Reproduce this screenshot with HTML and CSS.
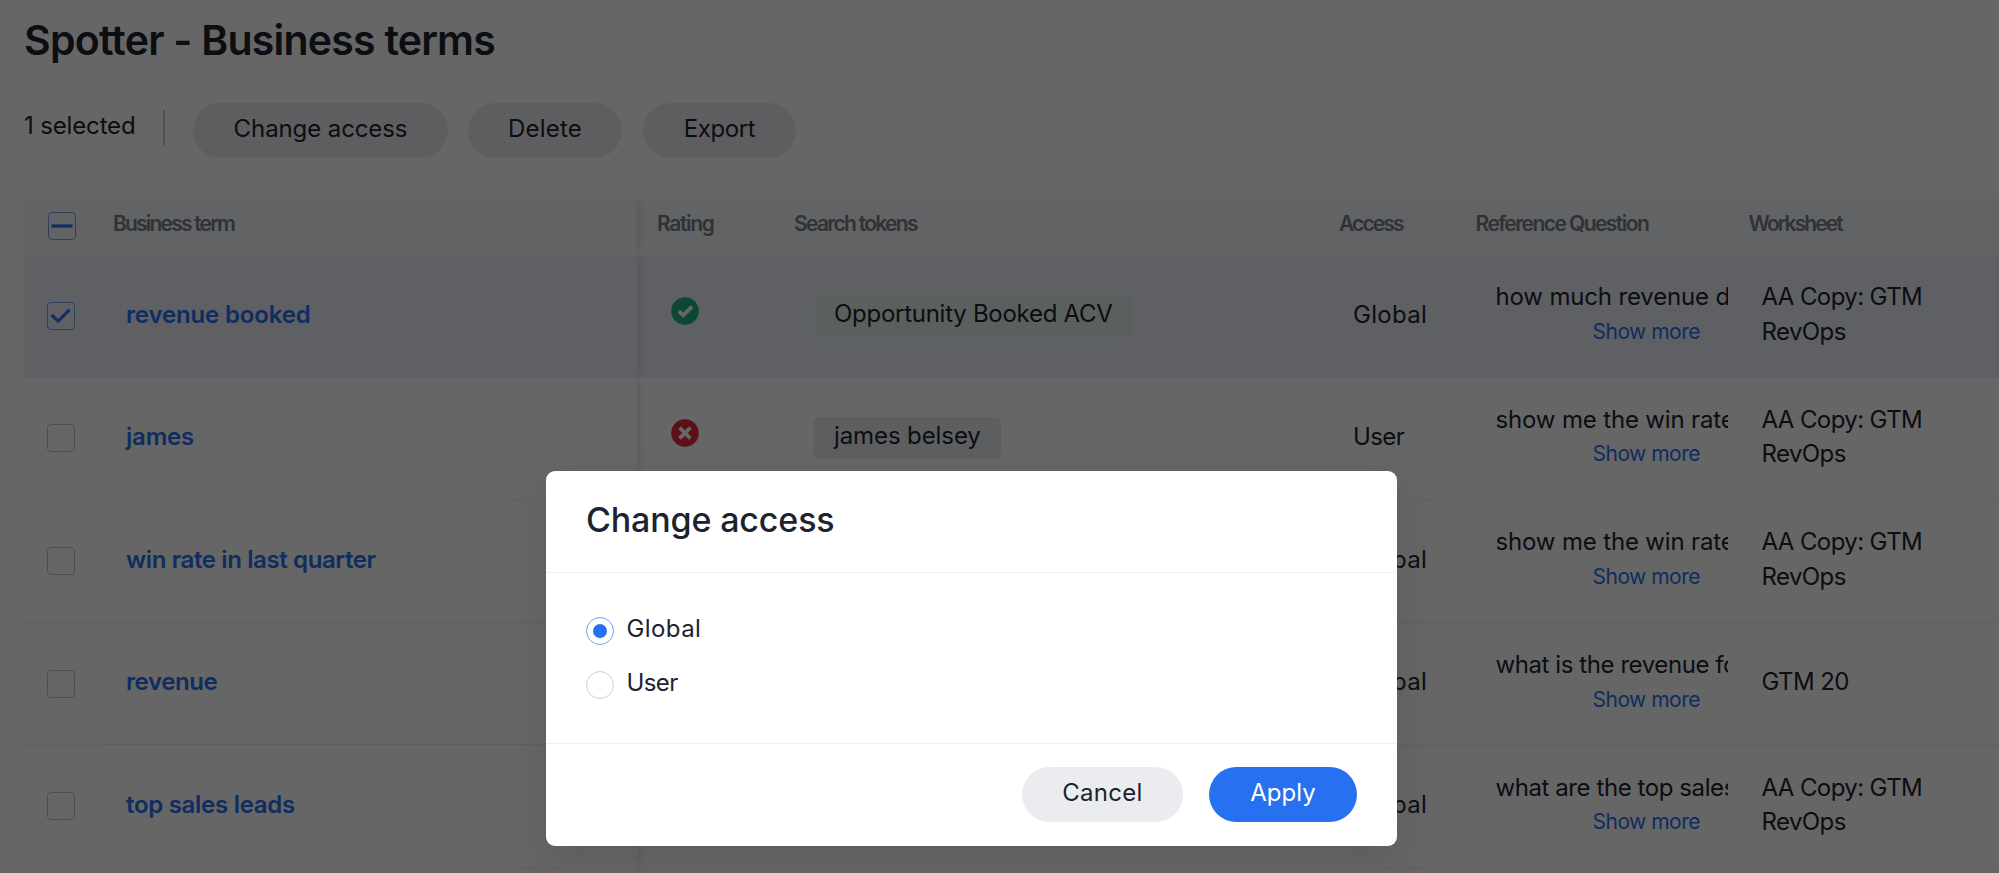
FILE: index.html
```html
<!DOCTYPE html>
<html lang="en">
<head>
<meta charset="utf-8">
<title>Spotter - Business terms</title>
<link rel="stylesheet" href="styles.css">
</head>
<body>
<main class="page">
  <h1 class="title">Spotter - Business terms</h1>
  <div class="toolbar">
    <span class="count">1 selected</span>
    <span class="divider"></span>
    <button class="btn access-btn">Change access</button>
    <button class="btn delete-btn">Delete</button>
    <button class="btn export-btn">Export</button>
  </div>
  <section class="table">
    <div class="row head">
      <div class="cell check"><span class="box on"><svg viewBox="0 0 28 28"><path d="M3.5 14H24.5" stroke-width="3.2"/></svg></span></div>
      <div class="cell term">Business term</div>
      <div class="cell rating">Rating</div>
      <div class="cell tokens">Search tokens</div>
      <div class="cell access">Access</div>
      <div class="cell question">Reference Question</div>
      <div class="cell sheet">Worksheet</div>
    </div>
    <div class="row selected">
      <div class="cell check"><span class="box on"><svg viewBox="0 0 28 28"><path d="M4.6 12.8L11.2 19.2L22.5 7.6" stroke-width="3"/></svg></span></div>
      <div class="cell term">revenue booked</div>
      <div class="cell rating"><svg class="icon" viewBox="0 0 28 28"><circle class="good" cx="14" cy="14" r="13.8"/><path d="M7.8 14.2L12.3 18.4L21 9.6"/></svg></div>
      <div class="cell tokens"><span class="token match">Opportunity Booked ACV</span></div>
      <div class="cell access global">Global</div>
      <div class="cell question"><span class="ask">how much revenue d</span><a class="more">Show more</a></div>
      <div class="cell sheet">AA Copy: GTM RevOps</div>
    </div>
    <div class="row">
      <div class="cell check"><span class="box"></span></div>
      <div class="cell term james">james</div>
      <div class="cell rating"><svg class="icon" viewBox="0 0 28 28"><circle class="bad" cx="14" cy="14" r="13.8"/><path d="M8.6 8.6L19.4 19.4M19.4 8.6L8.6 19.4"/></svg></div>
      <div class="cell tokens"><span class="token james-token">james belsey</span></div>
      <div class="cell access user">User</div>
      <div class="cell question"><span class="ask">show me the win rate</span><a class="more">Show more</a></div>
      <div class="cell sheet">AA Copy: GTM RevOps</div>
    </div>
    <div class="row">
      <div class="cell check"><span class="box"></span></div>
      <div class="cell term win">win rate in last quarter</div>
      <div class="cell rating"></div>
      <div class="cell tokens"></div>
      <div class="cell access global">Global</div>
      <div class="cell question"><span class="ask">show me the win rate</span><a class="more">Show more</a></div>
      <div class="cell sheet">AA Copy: GTM RevOps</div>
    </div>
    <div class="row">
      <div class="cell check"><span class="box"></span></div>
      <div class="cell term revenue">revenue</div>
      <div class="cell rating"></div>
      <div class="cell tokens"></div>
      <div class="cell access global">Global</div>
      <div class="cell question"><span class="ask tight">what is the revenue fo</span><a class="more">Show more</a></div>
      <div class="cell sheet gtm">GTM 20</div>
    </div>
    <div class="row">
      <div class="cell check"><span class="box"></span></div>
      <div class="cell term top">top sales leads</div>
      <div class="cell rating"></div>
      <div class="cell tokens"></div>
      <div class="cell access global">Global</div>
      <div class="cell question"><span class="ask tight">what are the top sales</span><a class="more">Show more</a></div>
      <div class="cell sheet">AA Copy: GTM RevOps</div>
    </div>
    <div class="row">
      <div class="cell check"></div>
      <div class="cell term"></div>
    </div>
  </section>
</main>
<div class="overlay">
  <div class="modal" role="dialog">
    <h2 class="modal-title">Change access</h2>
    <div class="options">
      <label class="option"><span class="radio chosen"></span><span class="label-global">Global</span></label>
      <label class="option"><span class="radio"></span><span class="label-user">User</span></label>
    </div>
    <div class="actions">
      <button class="btn cancel">Cancel</button>
      <button class="btn apply">Apply</button>
    </div>
  </div>
</div>
</body>
</html>
```
FILE: styles.css
```css
* { box-sizing: border-box; }

body {
  margin: 0;
  height: 873px;
  overflow: hidden;
  background: #fff;
  color: #1d232f;
  font: 400 24px/34.5px Inter, "Liberation Sans", sans-serif;
}

.page {
  height: 873px;
  overflow: hidden;
  padding: 14px 0 0 24px;
}

.title {
  margin: 0;
  font-size: 41px;
  font-weight: 600;
  line-height: 52px;
  letter-spacing: -0.76px;
}

.toolbar {
  display: flex;
  align-items: center;
  height: 55px;
  margin-top: 37px;
}

.count {
  width: 139px;
  padding-bottom: 8px;
  letter-spacing: -0.15px;
}

.divider {
  width: 2px;
  height: 35px;
  margin: 0 28px 7px 0;
  background: #c0c6cf;
}

.btn {
  height: 55px;
  padding: 0 0 2px;
  border: 0;
  border-radius: 28px;
  background: #eaecf0;
  color: #1d232f;
  font: inherit;
}

.access-btn { width: 255px; margin-right: 20px; letter-spacing: -0.1px; }
.delete-btn { width: 154px; margin-right: 21px; letter-spacing: 0.2px; }
.export-btn { width: 153px; letter-spacing: -0.4px; }

.table { margin-top: 41px; }

.row {
  display: grid;
  grid-template-columns: 67px 546px 135px 546px 136.5px 273px 1fr;
  height: 122.6px;
  border-bottom: 1px solid #f0f1f5;
}

.cell {
  display: flex;
  align-items: center;
  padding-bottom: 2px;
}

.head {
  height: 56px;
  border-bottom: 1px solid #fff;
  background: #f6f8fa;
  color: #777e8b;
  font-size: 21px;
  font-weight: 600;
}

.head .cell {
  padding-left: 22px;
  padding-bottom: 4px;
  border-right: 1px solid #f0f2f5;
  letter-spacing: -1.7px;
  white-space: nowrap;
}

.head .sheet { padding-left: 21px; border-right: 0; letter-spacing: -1.9px; }
.head .rating { padding-left: 20px; letter-spacing: -1.35px; }
.head .access { padding-left: 21px; letter-spacing: -1.9px; }
.head .question { padding-left: 21px; letter-spacing: -1.55px; }
.head .check { padding: 0 0 1px 24px; }

.selected { background: #eef0f9; border-bottom-color: #eef0f9; }

.check { padding: 0 0 0 23px; }

.box {
  width: 28px;
  height: 28px;
  border: 1.5px solid #c0c6cf;
  border-radius: 4px;
}

.box.on { border-color: #71a1f4; }
.box svg { display: block; width: 28px; height: 28px; margin: -1px; }
.box path { fill: none; stroke: #2770ef; }

.row .term {
  padding-left: 35px;
  color: #2770ef;
  font-weight: 600;
  letter-spacing: -0.15px;
  box-shadow: 5px 0 8px -3px rgba(25, 35, 49, 0.12);
  clip-path: inset(0 -16px 0 0);
}

.row.head .term {
  padding-left: 22px;
  color: inherit;
  letter-spacing: -1.8px;
}

.row .james { letter-spacing: -0.2px; }
.row .win { letter-spacing: -0.38px; }
.row .revenue { letter-spacing: -0.4px; }
.row .top { letter-spacing: -0.29px; }

.rating { padding: 0 0 10px 34px; }
.icon { width: 28px; height: 28px; }
.icon path { fill: none; stroke: #fff; stroke-width: 3.8; }
.good { fill: #1fb57a; }
.bad { fill: #e22b3d; }

.tokens { padding-left: 42px; padding-bottom: 0; }

.token {
  height: 42px;
  padding: 2px 20px 0;
  border-radius: 6px;
  background: #e8eaee;
  letter-spacing: -0.27px;
}

.token.match { background: #e0f0eb; }
.james-token { width: 187px; letter-spacing: -0.1px; }

.row:not(.head) .access { padding-left: 35px; }
.row:not(.head) .user { letter-spacing: -0.6px; }
.global { letter-spacing: 0.3px; }

.row:not(.head) .question {
  flex-direction: column;
  align-items: flex-start;
  justify-content: center;
  padding-left: 41px;
}

.ask {
  width: 100%;
  overflow: hidden;
  white-space: nowrap;
  letter-spacing: -0.16px;
}

.tight { letter-spacing: -0.42px; }

.more {
  margin-left: 97px;
  color: #2770ef;
  font-size: 21px;
  letter-spacing: -0.5px;
}

.row:not(.head) .sheet {
  padding: 0 60px 2px 34px;
  letter-spacing: -0.6px;
}

.overlay {
  position: absolute;
  inset: 0;
  background: rgba(0, 0, 0, 0.6);
}

.modal {
  position: absolute;
  left: 545.5px;
  top: 470.5px;
  width: 851.5px;
  height: 375px;
  border-radius: 9px;
  background: #fff;
  box-shadow: 0 14px 36px rgba(45, 60, 66, 0.2);
}

.modal-title {
  height: 102px;
  margin: 0;
  padding: 28px 40.5px 0;
  border-bottom: 1px solid #eef0f4;
  font-size: 34px;
  font-weight: 500;
  line-height: 42px;
  letter-spacing: -0.15px;
}

.options {
  display: flex;
  flex-direction: column;
  gap: 26px;
  height: 171px;
  padding: 44px 40px 0;
  border-bottom: 1px solid #eef0f4;
}

.option {
  display: flex;
  align-items: center;
  gap: 13px;
  height: 28px;
}

.radio {
  display: grid;
  place-items: center;
  width: 28px;
  height: 28px;
  border: 1.5px solid #c9cdd6;
  border-radius: 50%;
}

.chosen { border-color: #71a1f4; }

.chosen::after {
  content: "";
  width: 14px;
  height: 14px;
  border-radius: 50%;
  background: #2770ef;
}

.label-global { padding-bottom: 3px; letter-spacing: 0.4px; }
.label-user { padding-bottom: 2px; letter-spacing: -0.6px; }

.actions {
  display: flex;
  justify-content: flex-end;
  gap: 26px;
  padding: 23px 40px 0;
}

.cancel { width: 161px; letter-spacing: 0.3px; }
.apply { width: 148px; background: #2770ef; color: #fff; }
```
